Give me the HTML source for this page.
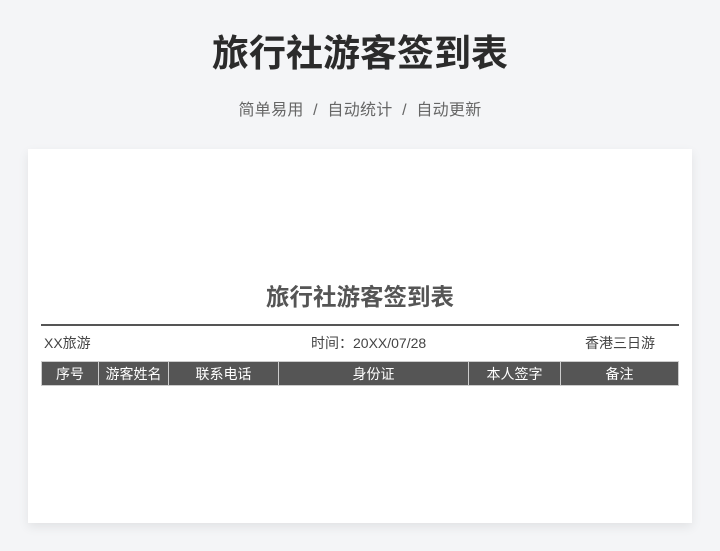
<!DOCTYPE html>
<html><head><meta charset="utf-8"><style>
*{margin:0;padding:0;box-sizing:border-box}
body{width:720px;height:551px;background:#f4f5f7;font-family:"Liberation Sans","Noto Sans CJK SC",sans-serif;position:relative;overflow:hidden}
.t{position:absolute;top:29px;left:0;width:720px;text-align:center;font-size:37px;font-weight:bold;color:#2b2b2b;line-height:50px}
.s{position:absolute;top:100px;left:0;width:720px;text-align:center;font-size:16px;color:#666;line-height:22px;letter-spacing:0.3px}
.card{position:absolute;left:28px;top:149px;width:664px;height:374px;background:#fff;box-shadow:0 4px 10px rgba(0,0,0,.08)}
.it{position:absolute;top:282px;left:0;width:720px;text-align:center;font-size:23.5px;font-weight:bold;color:#555;line-height:30px}
.line{position:absolute;left:41px;top:324px;width:638px;height:2px;background:#555}
.info{position:absolute;top:333px;font-size:14px;color:#444;line-height:20px}
table{position:absolute;left:41px;top:361px;width:638px;border-collapse:collapse}
td{background:#555;color:#fff;font-size:14px;text-align:center;height:24px;border:1px solid #ccc;padding:0}
</style></head><body>
<div class="t">旅行社游客签到表</div>
<div class="s">简单易用 &nbsp;/ &nbsp;自动统计 &nbsp;/ &nbsp;自动更新</div>
<div class="card"></div>
<div class="it">旅行社游客签到表</div>
<div class="line"></div>
<div class="info" style="left:44px">XX旅游</div>
<div class="info" style="left:311px">时间：20XX/07/28</div>
<div class="info" style="left:585px">香港三日游</div>
<table><tr>
<td style="width:57px">序号</td><td style="width:70px">游客姓名</td><td style="width:110px">联系电话</td><td style="width:190px">身份证</td><td style="width:92px">本人签字</td><td>备注</td>
</tr></table>
</body></html>
